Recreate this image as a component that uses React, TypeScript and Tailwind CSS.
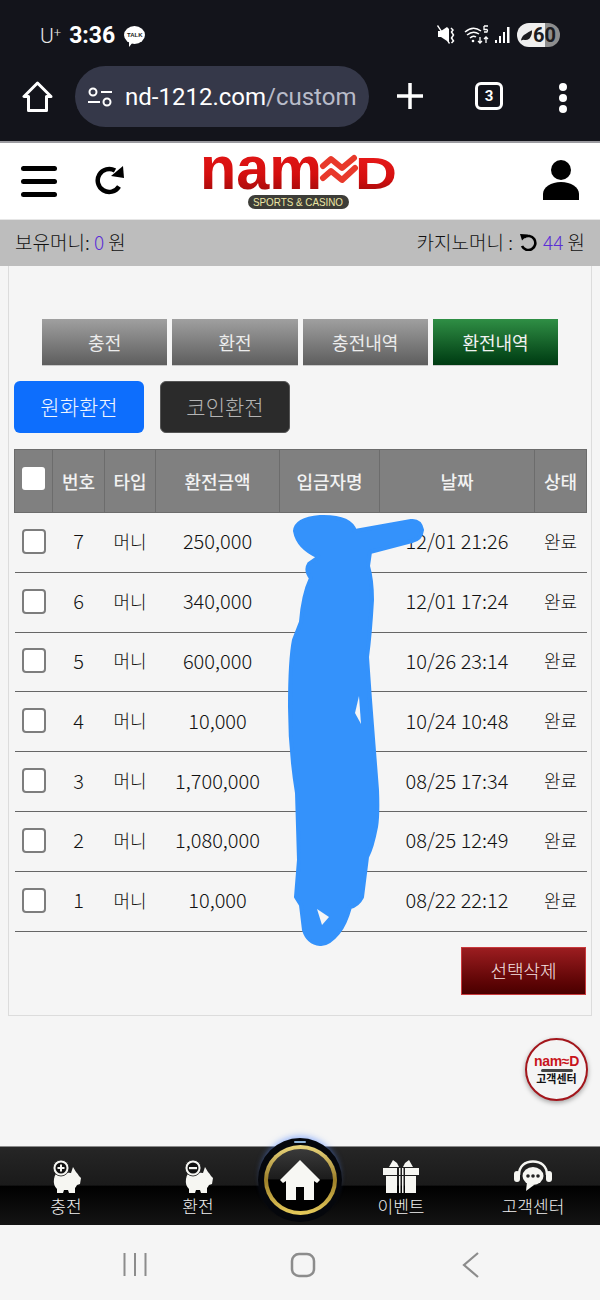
const KR = "font-['Noto_Sans_CJK_KR','Noto_Sans',sans-serif]";

const ROWS = [
  { no: 7, amount: "250,000", date: "12/01 21:26" },
  { no: 6, amount: "340,000", date: "12/01 17:24" },
  { no: 5, amount: "600,000", date: "10/26 23:14" },
  { no: 4, amount: "10,000", date: "10/24 10:48" },
  { no: 3, amount: "1,700,000", date: "08/25 17:34" },
  { no: 2, amount: "1,080,000", date: "08/25 12:49" },
  { no: 1, amount: "10,000", date: "08/22 22:12" },
];

const TABS = ["충전", "환전", "충전내역", "환전내역"];

function StatusBar() {
  return (
    <div className="flex h-[64px] items-end pb-[17px] pl-[40px] pr-[40px] text-white">
      <span className="font-['Roboto',sans-serif] text-[21px] font-light leading-none text-[#e8e8e8]">
        U<sup className="text-[13px]">+</sup>
      </span>
      <span className="ml-[8px] font-['Roboto',sans-serif] text-[23px] font-bold leading-none">3:36</span>
      <span className="relative mb-[3px] ml-[9px] flex h-[18px] w-[21px] items-center justify-center rounded-[50%] bg-white">
        <span className="font-['Liberation_Sans',sans-serif] text-[6px] font-bold leading-none text-[#222]">TALK</span>
        <span className="absolute bottom-[-3px] left-[5px] h-0 w-0 border-r-[4px] border-t-[5px] border-r-transparent border-t-white" />
      </span>
      <div className="ml-auto flex items-center">
        <svg width="18" height="20" viewBox="0 0 18 20" fill="#fff">
          <path d="M1 6h3l6-4 2 2v13l-2-1-6-4H1zM0 1l1-1 12 18-1 1z" />
          <path d="M14 3l2 2-1.500 2 2 3-2 3 2 3-2 2" fill="none" stroke="#fff" strokeWidth="1.500" />
        </svg>
        <svg className="ml-[9px]" width="26" height="20" viewBox="0 0 26 20" fill="none" stroke="#fff" strokeWidth="1.500">
          <path d="M1 7q8-7 16-1M3 10q6-5 12-1M6 13q3-3 6-1" />
          <circle cx="9" cy="16" r="1.300" fill="#fff" stroke="none" />
          <path d="M20 1h4M20 1v3.500h3q1 1 0 2.500h-3M16 12v6M14 16l2 2 2-2M22 18v-6M20 14l2-2 2 2" strokeWidth="1.300" />
        </svg>
        <svg className="ml-[5px]" width="16" height="20" viewBox="0 0 16 20" fill="#fff">
          <rect x="0" y="15" width="2" height="3" />
          <rect x="4" y="11" width="2" height="7" />
          <rect x="8" y="7" width="2" height="11" />
          <rect x="12" y="2" width="2.500" height="16" />
        </svg>
        <span className="relative ml-[6px] flex h-[24px] w-[43px] items-center justify-end overflow-hidden rounded-full bg-[linear-gradient(90deg,#efefef_0,#efefef_65%,#8e8e8e_65%,#8e8e8e_100%)] pr-[4px] font-['Roboto',sans-serif] text-[20px] font-bold leading-none text-[#1c1c20]">
          <svg className="absolute left-[3px] top-[5px]" width="13" height="14" viewBox="0 0 14 14" fill="#1c1c20">
            <path d="M1 13Q2 8 6 6q3-2 7-4 0 6-3 9-3 2-6 1-1 0-3 1z" />
          </svg>
          60
        </span>
      </div>
    </div>
  );
}

function BrowserBar() {
  return (
    <div className="flex h-[77px] items-start pt-[2px] text-white">
      <svg className="ml-[22px] mt-[15px]" width="31" height="32" viewBox="0 0 31 32" fill="none" stroke="#fff" strokeWidth="3" strokeLinejoin="round">
        <path d="M15.500 2L2 15.500h4.500V29.500h18V15.500H29z" />
      </svg>
      <div className="ml-[22px] flex h-[61px] w-[294px] items-center rounded-full bg-[#353849]">
        <svg className="ml-[12px] shrink-0" width="26" height="22" viewBox="0 0 26 22" fill="none" stroke="#fff" strokeWidth="2">
          <circle cx="6" cy="6" r="3.500" />
          <path d="M14 6h11M1 16h12" />
          <circle cx="20" cy="16" r="3.500" />
        </svg>
        <span className="ml-[12px] whitespace-nowrap font-['Roboto',sans-serif] text-[24px] leading-none text-white">
          nd-1212.com<span className="text-[#b9bcc9]">/custom</span>
        </span>
      </div>
      <svg className="ml-[28px] mt-[17px]" width="26" height="26" viewBox="0 0 26 26" stroke="#fff" strokeWidth="3.500">
        <path d="M13 0v26M0 13h26" />
      </svg>
      <span className="ml-[52px] mt-[16px] flex h-[28px] w-[28px] items-center justify-center rounded-[6px] border-[3px] border-white font-['Roboto',sans-serif] text-[15px] font-bold leading-none">
        3
      </span>
      <span className="ml-[56px] mt-[17px] flex flex-col gap-[3px]">
        <span className="h-[8px] w-[8px] rounded-full bg-white" />
        <span className="h-[8px] w-[8px] rounded-full bg-white" />
        <span className="h-[8px] w-[8px] rounded-full bg-white" />
      </span>
    </div>
  );
}

function Logo() {
  return (
    <svg width="198" height="56" viewBox="0 0 198 56" className="ml-[75px] mt-[5px] shrink-0 overflow-visible">
      <defs>
        <linearGradient id="logoRed" x1="0" y1="0" x2="0" y2="1">
          <stop offset="0" stopColor="#ee1c1c" />
          <stop offset="0.6" stopColor="#d40f0f" />
          <stop offset="1" stopColor="#8c0a0a" />
        </linearGradient>
      </defs>
      <text x="0" y="33" fontFamily="Liberation Sans" fontWeight="700" fontSize="62" textLength="122" lengthAdjust="spacingAndGlyphs" fill="url(#logoRed)">
        nam
      </text>
      <path d="M123 10l8-7 11 9 12-10M123 22l8-7 11 9 13-12" fill="none" stroke="#e8392b" strokeWidth="6" strokeLinejoin="round" strokeLinecap="round" />
      <text x="155" y="33" fontFamily="Liberation Sans" fontWeight="700" fontSize="45" textLength="42" lengthAdjust="spacingAndGlyphs" fill="url(#logoRed)">
        D
      </text>
      <rect x="48" y="39" width="101" height="14" rx="7" fill="#3d3d38" />
      <text x="98" y="50" textAnchor="middle" fontFamily="Liberation Sans" fontSize="11" textLength="90" lengthAdjust="spacingAndGlyphs" fill="#ece5a4">
        SPORTS &amp; CASINO
      </text>
    </svg>
  );
}

function Header() {
  return (
    <div className="flex h-[78px] items-center border-t-2 border-[#9b9ba0] bg-white">
      <span className="ml-[21px] flex w-[36px] flex-col gap-[8px]">
        <span className="h-[5px] rounded-full bg-black" />
        <span className="h-[5px] rounded-full bg-black" />
        <span className="h-[5px] rounded-full bg-black" />
      </span>
      <svg className="ml-[38px] mt-[-3px]" width="30" height="30" viewBox="0 0 30 30" fill="none">
        <path d="M24 21.500A11.500 11.500 0 1 1 20 5.500" stroke="#000" strokeWidth="4.500" />
        <path d="M16 11L29 13 28 1z" fill="#000" />
      </svg>
      <Logo />
      <svg className="ml-[145px] mt-[-3px]" width="36" height="40" viewBox="0 0 36 40" fill="#000">
        <circle cx="18" cy="10" r="10" />
        <path d="M0 40v-6C0 27 8 22 18 22s18 5 18 12v6z" />
      </svg>
    </div>
  );
}

function MoneyBar() {
  return (
    <div className={`flex h-[47px] items-center justify-between border-t border-[#e6e6e6] bg-[#bdbdbd] pb-[2px] pl-[15px] pr-[15px] text-[19px] font-light text-[#111] ${KR}`}>
      <span>
        보유머니: <span className="text-[#5b2fd6]">0</span> 원
      </span>
      <span className="flex items-center gap-[6px]">
        카지노머니 :
        <svg width="18" height="18" viewBox="0 0 18 18" fill="none">
          <path d="M5 4.500A7 7 0 1 1 3 13" stroke="#000" strokeWidth="2.600" />
          <path d="M1 1l8 .5-6 6z" fill="#000" />
        </svg>
        <span>
          <span className="text-[#5b2fd6]">44</span> 원
        </span>
      </span>
    </div>
  );
}

function TableHead({ label, className = "" }: { label: string; className?: string }) {
  return <th className={`border-r border-[#6c6c6c] text-center font-medium ${className}`}>{label}</th>;
}

function Panel() {
  return (
    <div className={`mx-[8px] h-[750px] border border-t-0 border-[#dcdcdc] px-[5px] pt-[53px] ${KR}`}>
      <div className="ml-[28px] flex gap-[5px]">
        {TABS.map((t, i) => (
          <button
            key={t}
            type="button"
            className={`h-[47px] w-[125.300px] border-b border-[#c9c9c9] text-[18px] ${
              i === 3
                ? "bg-gradient-to-b from-[#2f8f45] to-[#003b12] text-[#f2f2f2]"
                : "bg-gradient-to-b from-[#a0a0a0] to-[#5e5e5e] text-[#ececec]"
            }`}
          >
            {t}
          </button>
        ))}
      </div>

      <div className="mt-[15px] flex gap-[16px]">
        <button type="button" className="h-[52px] w-[130px] rounded-[6px] bg-[#0d6efd] text-[21px] font-light text-[#f2f7ff]">
          원화환전
        </button>
        <button type="button" className="h-[52px] w-[130px] rounded-[6px] border border-[#555] bg-[#2b2b2b] text-[21px] font-light text-[#b4b4b4]">
          코인환전
        </button>
      </div>

      <table className="mt-[16px] w-[572px] table-fixed border-collapse text-[18px] font-light text-[#111]">
        <colgroup>
          <col className="w-[38px]" />
          <col className="w-[52px]" />
          <col className="w-[51px]" />
          <col className="w-[124px]" />
          <col className="w-[100px]" />
          <col className="w-[155px]" />
          <col className="w-[52px]" />
        </colgroup>
        <thead>
          <tr className="h-[63px] border border-[#6c6c6c] bg-[#808080] text-[#f2f2f2]">
            <th className="border-r border-[#6c6c6c] pb-[5px]">
              <span className="ml-[7px] block h-[23px] w-[23px] rounded-[3px] bg-white" />
            </th>
            <TableHead label="번호" />
            <TableHead label="타입" />
            <TableHead label="환전금액" />
            <TableHead label="입금자명" />
            <TableHead label="날짜" />
            <TableHead label="상태" className="border-r-0" />
          </tr>
        </thead>
        <tbody>
          {ROWS.map((r) => (
            <tr key={r.no} className="h-[59.800px] border-b-[1.500px] border-[#666]">
              <td className="pb-[2px]">
                <span className="ml-[7px] block h-[25px] w-[24px] rounded-[4px] border-2 border-[#7d7d7d] bg-white" />
              </td>
              <td className="pb-[2px] text-center text-[20px]">{r.no}</td>
              <td className="pb-[2px] text-center">머니</td>
              <td className="pb-[2px] text-center text-[20px]">{r.amount}</td>
              <td />
              <td className="pb-[2px] text-center text-[20px]">{r.date}</td>
              <td className="pb-[2px] text-center">완료</td>
            </tr>
          ))}
        </tbody>
      </table>

      <div className="mt-[15px] flex justify-end">
        <button
          type="button"
          className="h-[48px] w-[125px] border border-[#c8393c] bg-gradient-to-b from-[#9c1d20] to-[#4a0000] text-[18px] font-light text-[#f6e3e3]"
        >
          선택삭제
        </button>
      </div>
    </div>
  );
}

// blue marker scribble lying over the depositor column
function Scribble() {
  return (
    <svg className="pointer-events-none absolute left-0 top-0" width="600" height="1000" viewBox="0 0 600 1000">
      <path
        fill="#3492fb"
        stroke="#3492fb"
        strokeWidth="4"
        strokeLinejoin="round"
        d="M295 531Q296 519 320 517Q350 516 355 531L411 521Q420 520 422 530Q421 539 412 541L370 552L368 566Q372 580 372 600Q370 635 367 657L370 700L377 790Q378 815 376 827Q372 848 367 857L362 897Q358 905 350 907Q345 925 338 933Q328 945 320 944Q308 943 304 930L301 905L296 897L299 860L297 793Q290 750 290 707Q290 660 294 640L301 622Q303 595 311 578Q305 570 309 564L319 557Q298 548 295 531Z"
      />
      <path fill="#f5f5f5" d="M317 909L329 917L322 925Z" />
      <path fill="#f5f5f5" d="M359 696L355 713L361 724Z" />
    </svg>
  );
}

function PiggyIcon({ sign }: { sign: "plus" | "minus" }) {
  return (
    <svg width="28" height="33" viewBox="0 0 28 33" fill="#f6f6f2" className="mr-[-1px]">
      <path d="M1 19Q2 11 9 12L18 13 20 7 23 12Q25 14 26 16L28 18 27 24 24 25Q23 27 22 28L22 33H16L15 30H11L10 33H4L4 29Q0 25 1 19Z" />
      <circle cx="8" cy="8" r="8" stroke="#111" strokeWidth="0.800" />
      <circle cx="8" cy="8" r="5.500" fill="#111" />
      <path d={sign === "plus" ? "M4.500 7h7v2h-7zM7 4.500h2v7H7z" : "M4 7h8v2.200H4z"} />
    </svg>
  );
}

function GiftIcon() {
  return (
    <svg width="36" height="33" viewBox="0 0 36 33" fill="#f6f6f2">
      <path d="M6 7L10 0l4 3 2 4zM20 7l2-4 4-3 4 7z" />
      <path d="M0 8h14v7H0zM16 8h1.500v7H16zM19 8h1.500v7H19zM22 8h14v7H22zM3 16h11v17H3zM16 16h1.500v17H16zM19 16h1.500v17H19zM22 16h11v17H22z" />
    </svg>
  );
}

function HeadsetIcon() {
  return (
    <svg width="38" height="33" viewBox="0 0 38 33" fill="none">
      <path d="M5 15C5 6 11 1.500 19 1.500S33 6 33 15" stroke="#f6f6f2" strokeWidth="2.500" />
      <rect x="0" y="11" width="6" height="11" rx="3" fill="#f6f6f2" />
      <rect x="32" y="11" width="6" height="11" rx="3" fill="#f6f6f2" />
      <ellipse cx="19" cy="16" rx="10.500" ry="9" fill="#f6f6f2" />
      <path d="M13 22l-1 9 8-6z" fill="#f6f6f2" />
      <circle cx="14" cy="16" r="1.800" fill="#222" />
      <circle cx="19" cy="16" r="1.800" fill="#222" />
      <circle cx="24" cy="16" r="1.800" fill="#222" />
    </svg>
  );
}

function NavItem({ label, children }: { label: string; children: React.ReactNode }) {
  return (
    <div className="flex flex-col items-center pt-[12px]">
      <div className="flex h-[34px] items-end">{children}</div>
      <span className="mt-[2px] text-[17px] font-light leading-[22px] text-[#f0f0f0]">{label}</span>
    </div>
  );
}

function BottomNav() {
  return (
    <div className={`relative grid h-[79px] grid-cols-[132px_132px_72px_130px_134px] border-t border-[#8a8a8a] bg-[linear-gradient(180deg,#262626_0,#1a1a1a_49%,#000_50%,#141414_100%)] ${KR}`}>
      <NavItem label="충전">
        <PiggyIcon sign="plus" />
      </NavItem>
      <NavItem label="환전">
        <PiggyIcon sign="minus" />
      </NavItem>
      <div className="relative">
        <div className="absolute left-[-6px] top-[-9px] flex h-[84px] w-[84px] items-center justify-center rounded-full bg-[#05070c] shadow-[0_-5px_6px_-3px_rgba(90,140,255,0.6)]">
          <span className="absolute left-[36px] top-[3px] h-[2px] w-[12px] rounded-full bg-[#8fb4d8]" />
          <div className="flex h-[70px] w-[73px] items-center justify-center rounded-[50%] bg-gradient-to-b from-[#ecd87e] via-[#9c7f28] to-[#e8cc5c] p-[4px]">
            <div className="flex h-full w-full items-center justify-center rounded-[50%] bg-[linear-gradient(180deg,#3a3a3a_0,#1c1c1c_48%,#000_50%,#000_100%)]">
              <svg width="40" height="40" viewBox="0 0 40 40" fill="#f7f7f3">
                <path d="M20 0L40 20l-3 3-3-2v19H24V27h-8v13H6V21l-3 2-3-3z" />
              </svg>
            </div>
          </div>
        </div>
      </div>
      <NavItem label="이벤트">
        <GiftIcon />
      </NavItem>
      <NavItem label="고객센터">
        <HeadsetIcon />
      </NavItem>
    </div>
  );
}

function SupportBadge() {
  return (
    <div className={`absolute left-[525px] top-[1038px] flex h-[63px] w-[63px] flex-col items-center justify-center rounded-full border-2 border-[#a3161c] bg-[#f4f4f4] shadow-[0_2px_5px_rgba(0,0,0,0.35)] ${KR}`}>
      <span className="font-['Liberation_Sans',sans-serif] text-[14px] font-bold leading-[14px] tracking-[-0.3px] text-[#c8141c]">nam≈D</span>
      <span className="mt-[1px] h-[3px] w-[32px] rounded-full bg-[#444]" />
      <span className="text-[11px] font-bold leading-[13px] text-[#111]">고객센터</span>
    </div>
  );
}

function SystemNav() {
  return (
    <div className="flex h-[75px] items-center bg-[#f5f5f5] pt-[4px]">
      <svg className="ml-[123px]" width="24" height="25" viewBox="0 0 24 25" stroke="#8c8c8c" strokeWidth="2">
        <path d="M1.500 1v23M12 1v23M22.500 1v23" />
      </svg>
      <svg className="ml-[143px]" width="26" height="26" viewBox="0 0 26 26" fill="none" stroke="#8c8c8c" strokeWidth="2.500">
        <rect x="2" y="2" width="22" height="22" rx="7" />
      </svg>
      <svg className="ml-[146px]" width="18" height="26" viewBox="0 0 18 26" fill="none" stroke="#8c8c8c" strokeWidth="2.200">
        <path d="M16 1L2 13l14 12" />
      </svg>
    </div>
  );
}

export default function App() {
  return (
    <div className="relative flex h-[1300px] w-[600px] flex-col overflow-hidden bg-[#f5f5f5]">
      <div className="bg-[#13141b]">
        <StatusBar />
        <BrowserBar />
      </div>
      <Header />
      <MoneyBar />
      <div className="flex-1">
        <Panel />
      </div>
      <BottomNav />
      <SystemNav />
      <Scribble />
      <SupportBadge />
    </div>
  );
}
